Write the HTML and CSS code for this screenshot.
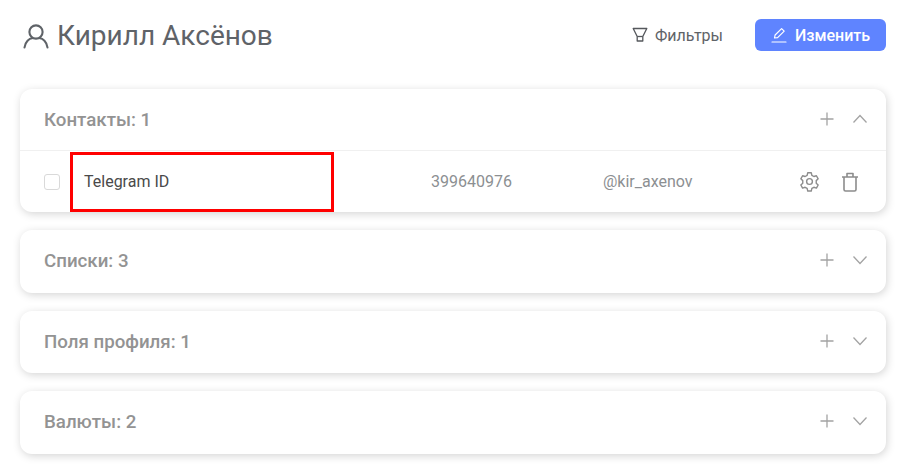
FILE: index.html
```html
<!DOCTYPE html>
<html lang="ru">
<head>
<meta charset="utf-8">
<title>Кирилл Аксёнов</title>
<link rel="stylesheet" href="styles.css">
</head>
<body>
<header class="top">
  <h1 class="title">
    <svg class="user" viewBox="0 0 26 26" width="26" height="26" fill="none" stroke="#5f6368" stroke-width="2.1" stroke-linecap="round"><circle cx="13" cy="9" r="6.6"/><path d="M1.5 24.5c.6-6 5-9.2 7.6-9.2M24.5 24.5c-.6-6-5-9.2-7.6-9.2"/></svg>
    Кирилл Аксёнов
  </h1>
  <button class="filters">
    <svg viewBox="0 0 16 16" width="16" height="16" fill="none" stroke="#55585c" stroke-width="1.3" stroke-linejoin="round"><path d="M1.200 1.500h13.600L10.800 9.500v4.500H5.200V9.500z"/><path d="M5.200 9.500h5.600"/></svg>
    Фильтры
  </button>
  <button class="edit">
    <svg viewBox="0 0 16 16" width="16" height="16" fill="none" stroke="#fff" stroke-width="1.2" stroke-linejoin="round" stroke-linecap="round"><path d="M3.500 11l.6-3L10.600 1.600l2.600 2.500L6.600 10.600z"/><path d="M1 15h14"/></svg>
    Изменить
  </button>
</header>
<main class="cards">
  <section class="card">
    <div class="card-head open">
      <span class="card-title">Контакты: 1</span>
      <svg class="ico" viewBox="0 0 14 14" width="14" height="14" stroke="#a3a3a3" stroke-width="1.3" fill="none"><path d="M7 .5v13M.5 7h13"/></svg>
      <svg class="chev" viewBox="0 0 16 10" width="16" height="10" stroke="#a3a3a3" stroke-width="1.3" fill="none"><path d="M1.500 8.500L8 1.500l6.500 7"/></svg>
    </div>
    <div class="row">
      <span class="check"></span>
      <div class="name">Telegram ID</div>
      <span class="val-id">399640976</span>
      <span class="val-nick">@kir_axenov</span>
      <svg class="gear" viewBox="0 0 24 24" width="21" height="21" fill="none" stroke="#8c8c8c" stroke-width="1.600" stroke-linejoin="round"><circle cx="12" cy="12" r="3.300"/><path d="M10 2.500h4l.7 3 2.300 1.300 2.900-.9 2 3.500-2.200 2.100v2.900l2.200 2.100-2 3.500-2.900-.9-2.300 1.300-.7 3h-4l-.7-3L7 19.100l-2.900.9-2-3.500 2.200-2.100v-2.900L2.100 9.400l2-3.500L7 6.800l2.300-1.300z" transform="translate(0 -.5)"/></svg>
      <svg class="trash" viewBox="0 0 18 20" width="18" height="20" fill="none" stroke="#8c8c8c" stroke-width="1.600" stroke-linejoin="round"><path d="M1 5h16M6 5V1.500h6V5M3 5v12.500a1.500 1.500 0 0 0 1.500 1.500h9a1.500 1.500 0 0 0 1.500-1.500V5"/></svg>
    </div>
  </section>
  <section class="card">
    <div class="card-head">
      <span class="card-title">Списки: 3</span>
      <svg class="ico" viewBox="0 0 14 14" width="14" height="14" stroke="#a3a3a3" stroke-width="1.3" fill="none"><path d="M7 .5v13M.5 7h13"/></svg>
      <svg class="chev" viewBox="0 0 16 10" width="16" height="10" stroke="#a3a3a3" stroke-width="1.3" fill="none"><path d="M1.500 1.500L8 8.500l6.500-7"/></svg>
    </div>
  </section>
  <section class="card">
    <div class="card-head">
      <span class="card-title">Поля профиля: 1</span>
      <svg class="ico" viewBox="0 0 14 14" width="14" height="14" stroke="#a3a3a3" stroke-width="1.3" fill="none"><path d="M7 .5v13M.5 7h13"/></svg>
      <svg class="chev" viewBox="0 0 16 10" width="16" height="10" stroke="#a3a3a3" stroke-width="1.3" fill="none"><path d="M1.500 1.500L8 8.500l6.500-7"/></svg>
    </div>
  </section>
  <section class="card">
    <div class="card-head">
      <span class="card-title">Валюты: 2</span>
      <svg class="ico" viewBox="0 0 14 14" width="14" height="14" stroke="#a3a3a3" stroke-width="1.3" fill="none"><path d="M7 .5v13M.5 7h13"/></svg>
      <svg class="chev" viewBox="0 0 16 10" width="16" height="10" stroke="#a3a3a3" stroke-width="1.3" fill="none"><path d="M1.500 1.500L8 8.500l6.500-7"/></svg>
    </div>
  </section>
</main>
</body>
</html>
```
FILE: styles.css
```css
* { box-sizing: border-box; }
html, body { margin: 0; height: 100%; overflow: hidden; background: #fff; }
body { font-family: Roboto, "Liberation Sans", sans-serif; padding: 0 20px; }

.top { display: flex; align-items: center; height: 70px; }
.title { flex: 1; display: flex; align-items: center; gap: 8px; margin: 1px 0 0; padding-left: 3px; font-size: 28px; font-weight: 400; color: #5f6368; line-height: 34px; }
.filters { display: flex; align-items: center; gap: 7px; border: 0; background: none; padding: 0; margin-right: 32px; font: 400 16px Roboto, sans-serif; color: #5f6368; }
.edit { display: flex; align-items: center; justify-content: center; gap: 8px; width: 131px; height: 32px; border: 0; border-radius: 6px; background: #5f84ff; color: #fff; font: 500 16px Roboto, sans-serif; }

.cards { display: flex; flex-direction: column; gap: 18px; padding-top: 19px; }
.card { background: #fff; border-radius: 12px; box-shadow: 1px 2px 8px rgba(0,0,0,.17); }
.card-head { display: flex; align-items: center; height: 62.500px; padding: 0 18px 1px 24px; border-bottom: 1px solid transparent; }
.card-head.open { height: 62px; border-bottom-color: #f0f0f0; }
.card-title { flex: 1; margin-top: 2px; font-size: 18.720px; font-weight: 500; color: #939393; }
.ico { margin-right: 18px; }

.row { display: flex; align-items: center; height: 61px; padding-left: 24px; font-size: 16px; color: #8c8f92; }
.check { width: 16px; height: 16px; border: 1px solid #d9d9d9; border-radius: 3px; margin-right: 10px; }
.name { align-self: flex-end; width: 264px; height: 60px; border: 3px solid #f00; display: flex; align-items: center; padding: 0 0 1px 11px; color: #4a4a4a; margin-right: 97px; }
.val-id { width: 172px; }
.val-nick { width: 196px; }
.gear { margin-right: 21px; }
```
